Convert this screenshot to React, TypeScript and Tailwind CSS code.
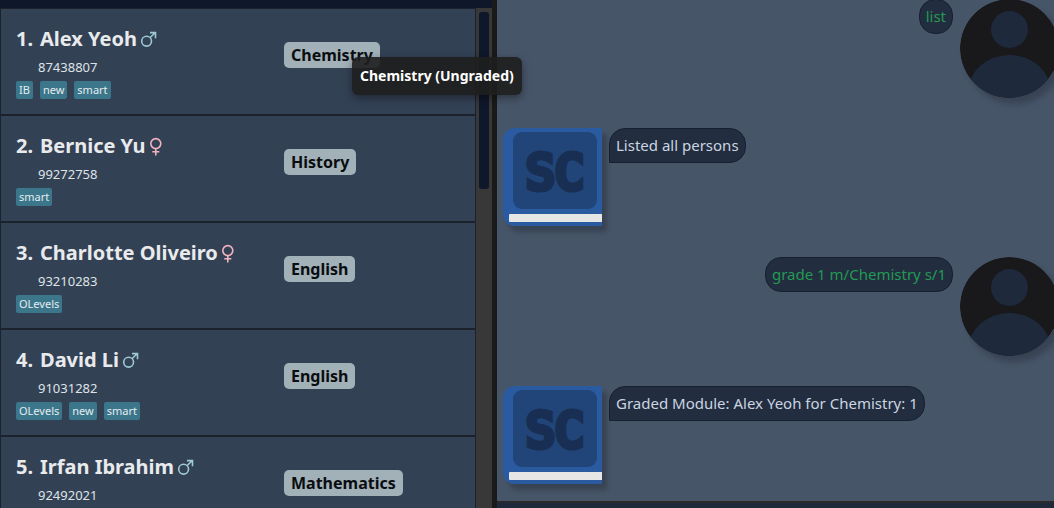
import React from "react";

type Gender = "male" | "female";

interface Person {
  name: string;
  gender: Gender;
  phone: string;
  tags: string[];
  module: string;
  tooltip?: string;
}

interface Message {
  from: "user" | "bot";
  text: string;
}

const persons: Person[] = [
  { name: "Alex Yeoh", gender: "male", phone: "87438807", tags: ["IB", "new", "smart"], module: "Chemistry", tooltip: "Chemistry (Ungraded)" },
  { name: "Bernice Yu", gender: "female", phone: "99272758", tags: ["smart"], module: "History" },
  { name: "Charlotte Oliveiro", gender: "female", phone: "93210283", tags: ["OLevels"], module: "English" },
  { name: "David Li", gender: "male", phone: "91031282", tags: ["OLevels", "new", "smart"], module: "English" },
  { name: "Irfan Ibrahim", gender: "male", phone: "92492021", tags: [], module: "Mathematics" },
];

const messages: Message[] = [
  { from: "user", text: "list" },
  { from: "bot", text: "Listed all persons" },
  { from: "user", text: "grade 1 m/Chemistry s/1" },
  { from: "bot", text: "Graded Module: Alex Yeoh for Chemistry: 1" },
];

function GenderIcon({ gender }: { gender: Gender }) {
  return gender === "male" ? (
    <svg role="img" aria-label="male" viewBox="0 0 18 18" className="ml-0.5 size-[18px] fill-none stroke-[#9fc9d6]" strokeWidth="1.6">
      <circle cx="7.6" cy="11.2" r="4.9" />
      <path d="M11 7.7 L16 2.8 M11 2.6 H16.5 V8.2" />
    </svg>
  ) : (
    <svg role="img" aria-label="female" viewBox="0 0 18 18" className="ml-0.5 size-[18px] overflow-visible fill-none stroke-[#f0b3c0]" strokeWidth="1.6">
      <circle cx="7.8" cy="6.6" r="5" />
      <path d="M7.8 11.6 V18.4 M4.3 14.7 H11.3" />
    </svg>
  );
}

function PersonCard({ person, index }: { person: Person; index: number }) {
  return (
    <li className="flex h-[107px] shrink-0 border border-[#1c222c] bg-[#334155] pl-[15px]">
      <div className="w-[268px] shrink-0 pt-4">
        <h2 className="flex h-7 items-center text-xl leading-7 font-bold whitespace-nowrap text-[#e8eaec]">
          <span className="w-6">{index}.</span>
          <span>{person.name}</span>
          <GenderIcon gender={person.gender} />
        </h2>
        <p className="mt-[5px] pl-[22px] text-[13px] leading-[18px] text-[#dfe3e7]">{person.phone}</p>
        <ul className="mt-[5px] flex gap-[7px]">
          {person.tags.map((tag) => (
            <li key={tag} className="rounded-xs bg-[#3c768b] px-[3px] text-[11px] leading-[18px] text-[#e4ecef]">
              {tag}
            </li>
          ))}
        </ul>
      </div>
      <div className="relative mt-[33px] h-[26px] rounded-[5px] bg-[#a2b0b8] px-[7px] text-base leading-[26px] font-bold text-[#0a0d10]">
        {person.module}
        {person.tooltip && (
          <div role="tooltip" className="absolute top-[15px] left-[68px] z-10 rounded-md bg-[#1e1e1e]/90 px-2 py-[9px] text-sm leading-5 whitespace-nowrap text-white shadow-[0_3px_8px_rgba(0,0,0,0.4)]">
            {person.tooltip}
          </div>
        )}
      </div>
    </li>
  );
}

function UserAvatar() {
  return (
    <svg role="img" aria-label="User" viewBox="0 0 99 99" className="size-[99px] shrink-0 rounded-full shadow-[5px_6px_6px_rgba(0,0,0,0.22)]">
      <clipPath id="face">
        <circle cx="49.5" cy="49.5" r="49.5" />
      </clipPath>
      <g clipPath="url(#face)">
        <rect width="99" height="99" fill="#19191b" />
        <circle cx="49.5" cy="30.5" r="18.5" fill="#1e293b" />
        <ellipse cx="49.5" cy="92" rx="41" ry="36" fill="#1e293b" />
      </g>
    </svg>
  );
}

function BotAvatar() {
  return (
    <svg role="img" aria-label="SC" viewBox="0 0 99 98" className="h-[98px] w-[99px] shrink-0 rounded-l-[11px] shadow-[5px_6px_5px_rgba(0,0,0,0.22)]">
      <rect width="110" height="98" rx="11" fill="#2a5aa0" />
      <rect x="10" y="4" width="84" height="77" rx="9" fill="#214579" />
      <rect x="6" y="86" width="94" height="8" rx="1" fill="#e6e6e6" />
      <text
        x="52"
        y="61"
        textAnchor="middle"
        fill="#182e52"
        stroke="#182e52"
        strokeWidth="6"
        className="font-['DejaVu_Sans_Mono',monospace] text-[48px] font-normal"
      >
        SC
      </text>
    </svg>
  );
}

function ChatRow({ message }: { message: Message }) {
  const isUser = message.from === "user";
  return (
    <li className={isUser ? "flex h-[99px] flex-row-reverse items-start gap-[7px]" : "flex h-[99px] items-start gap-[7px]"}>
      {isUser ? <UserAvatar /> : <BotAvatar />}
      <p
        className={
          isUser
            ? "rounded-2xl border border-[#172033] bg-[#222d3f] px-1.5 py-1.5 text-[15px] leading-[21px] text-[#229a54]"
            : "rounded-2xl rounded-bl-none border border-[#172033] bg-[#222d3f] px-1.5 py-1.5 text-[15px] leading-[21px] text-[#cbd5e1]"
        }
      >
        {message.text}
      </p>
    </li>
  );
}

export default function App() {
  return (
    <div className="flex h-screen overflow-hidden bg-[#1a1a1b] font-['Noto_Sans',sans-serif]">
      <section aria-label="Persons" className="relative z-10 flex w-[492px] shrink-0 flex-col bg-[#334155]">
        <div className="h-2 shrink-0 bg-[#0f172a]" />
        <div className="flex min-h-0 flex-1">
          <ol className="flex min-w-0 flex-1 flex-col">
            {persons.map((person, i) => (
              <PersonCard key={person.name} person={person} index={i + 1} />
            ))}
          </ol>
          <div className="w-4 bg-[#383838] px-[3px] pt-1">
            <div className="h-[177px] rounded-[3px] bg-[#0f172a]" />
          </div>
        </div>
      </section>
      <main className="ml-[5px] flex min-w-0 flex-1 flex-col">
        <div className="flex min-h-0 flex-1 flex-col justify-end overflow-hidden bg-[#475569]">
          <ol className="-mr-[5px] flex flex-col gap-[30px] pb-4 pl-1.5">
            {messages.map((message) => (
              <ChatRow key={message.text} message={message} />
            ))}
          </ol>
        </div>
        <div className="h-[7px] shrink-0 border-t-2 border-[#2a2a2c] bg-[#1e293b]" />
      </main>
    </div>
  );
}
